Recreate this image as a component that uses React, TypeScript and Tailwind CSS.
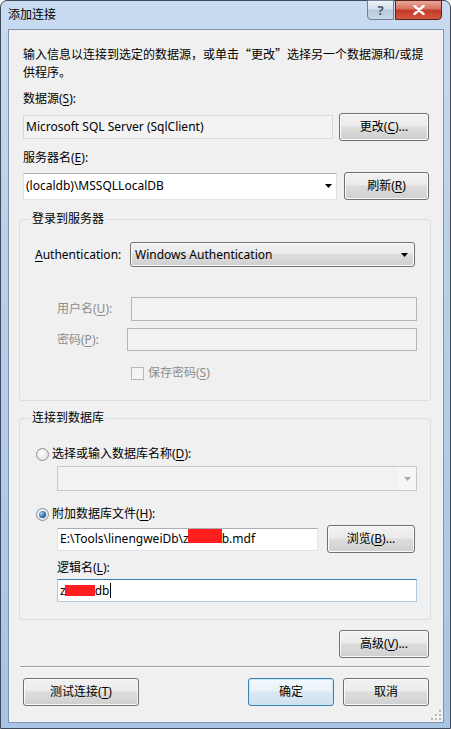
import { ReactNode } from "react";

const font = "font-['Noto_Sans','Noto_Sans_CJK_SC',sans-serif]";

function U({ c }: { c: string }) {
  return <span className="underline underline-offset-2">{c}</span>;
}

function Btn({
  children,
  className = "",
  primary = false,
}: {
  children: ReactNode;
  className?: string;
  primary?: boolean;
}) {
  return (
    <div
      className={`flex h-[28px] shrink-0 items-center justify-center rounded-[3px] border ${
        primary
          ? "border-[#3c7fb1] bg-[linear-gradient(#f4f9fc_0%,#e9f2f8_45%,#d9e8f3_50%,#cfe1ef_100%)] shadow-[inset_0_0_0_1px_#c8e6f8]"
          : "border-[#707070] bg-[linear-gradient(#f2f2f2_0%,#ebebeb_45%,#dddddd_50%,#cfcfcf_100%)] shadow-[inset_0_0_0_1px_#fbfbfb]"
      } ${className}`}
    >
      {children}
    </div>
  );
}

function Arrow({ color = "#000" }: { color?: string }) {
  return (
    <svg width="7" height="4" viewBox="0 0 7 4" className="shrink-0">
      <path d="M0 0h7L3.5 4z" fill={color} />
    </svg>
  );
}

function Radio({ checked = false }: { checked?: boolean }) {
  return (
    <span className="flex h-[13px] w-[13px] shrink-0 items-center justify-center rounded-full border border-[#8e8f8f] bg-[radial-gradient(circle_at_40%_40%,#ffffff,#d8d8d8)]">
      {checked && (
        <span className="h-[7px] w-[7px] rounded-full bg-[radial-gradient(circle_at_35%_35%,#9fd7f7,#2a6fb3_55%,#0c3f78)]" />
      )}
    </span>
  );
}

export default function App() {
  return (
    <div className={`${font} h-[729px] w-[451px] text-[12px] leading-[18px] text-black`}>
      <div className="flex h-full w-full flex-col rounded-t-[7px] border border-[#3e4a5b] bg-[linear-gradient(180deg,#c8dbf1_0%,#b9d0ea_35%,#a9c4e4_100%)] pb-[5px] pl-[7px] pr-[6px]">
        {/* title bar */}
        <div className="flex h-[28px] items-start">
          <div className="pt-[5px]">添加连接</div>
          <div className="-mt-[1px] ml-auto mr-[2px] flex">
            <div className="flex h-[20px] w-[27px] items-center justify-center rounded-bl-[4px] border border-[#6f7f95] bg-[linear-gradient(#eef3f8_0%,#d3deea_45%,#b9c9db_50%,#c9d7e6_100%)] text-[13px] font-bold leading-none text-[#4a5a70]">
              ?
            </div>
            <div className="ml-[1px] flex h-[20px] w-[47px] items-center justify-center rounded-br-[4px] border border-[#5b2019] bg-[linear-gradient(#eaa99b_0%,#d7705f_45%,#c13a27_50%,#d6573f_100%)]">
              <svg width="12" height="10" viewBox="0 0 12 10">
                <path d="M1.5 1l9 8M10.5 1l-9 8" stroke="#fff" strokeWidth="2.4" strokeLinecap="round" />
              </svg>
            </div>
          </div>
        </div>

        {/* client area */}
        <div className="relative flex flex-1 flex-col border border-[#8195ae] bg-[#f0f0f0] px-[14px]">
          <div className="mt-[15px]">
            输入信息以连接到选定的数据源，或单击
            <span className="font-['Noto_Sans_CJK_SC',sans-serif]">“更改”</span>
            选择另一个数据源和/或提
            <br />
            供程序。
          </div>

          <div className="mt-[8px]">
            数据源(<U c="S" />):
          </div>
          <div className="mt-[5px] flex h-[28px] items-center">
            <div className="flex h-[24px] w-[310px] items-center border border-[#d9d9d9] bg-[#f3f3f3] pl-[2px]">
              Microsoft SQL Server (SqlClient)
            </div>
            <Btn className="ml-auto w-[90px]">
              更改(<U c="C" />)...
            </Btn>
          </div>

          <div className="mt-[8px]">
            服务器名(<U c="E" />):
          </div>
          <div className="mt-[5px] flex h-[28px] items-center">
            <div className="flex h-[27px] w-[314px] items-center border border-[#e2e3ea] border-t-[#abadb3] bg-white pl-[2px] pr-[4px]">
              (localdb)\MSSQLLocalDB
              <span className="ml-auto">
                <Arrow />
              </span>
            </div>
            <Btn className="ml-auto w-[85px]">
              刷新(<U c="R" />)
            </Btn>
          </div>

          {/* 登录到服务器 */}
          <fieldset className="-ml-[4px] -mr-[2px] mt-[10px] rounded-[3px] border border-[#d5dfe5] px-[15px] pb-[18px]">
            <legend className="-ml-[5px] px-[2px]">登录到服务器</legend>
            <div className="mt-[14px] flex h-[25px] items-center">
              <div className="w-[95px]">
                <U c="A" />
                uthentication:
              </div>
              <div className="flex h-[25px] flex-1 items-center rounded-[3px] border border-[#707070] bg-[linear-gradient(#f2f2f2_0%,#ebebeb_45%,#dddddd_50%,#cfcfcf_100%)] pl-[4px] pr-[6px] shadow-[inset_0_0_0_1px_#fbfbfb]">
                Windows Authentication
                <span className="ml-auto">
                  <Arrow />
                </span>
              </div>
            </div>
            <div className="-mr-[2px] mt-[30px] flex h-[24px] items-center text-[#8d8d8d]">
              <div className="ml-[22px] w-[74px]">
                用户名(<U c="U" />):
              </div>
              <div className="h-[24px] flex-1 border border-[#b5b5b5] bg-[#f2f2f2]" />
            </div>
            <div className="-mr-[2px] mt-[7px] flex h-[23px] items-center text-[#8d8d8d]">
              <div className="ml-[22px] w-[70px]">
                密码(<U c="P" />):
              </div>
              <div className="h-[23px] flex-1 border border-[#b5b5b5] bg-[#f2f2f2]" />
            </div>
            <div className="mt-[13px] flex h-[18px] items-center pl-[96px] text-[#8d8d8d]">
              <span className="h-[13px] w-[13px] border border-[#b9b9b9] bg-[#f4f4f4]" />
              <span className="ml-[4px]">
                保存密码(<U c="S" />)
              </span>
            </div>
          </fieldset>

          {/* 连接到数据库 */}
          <fieldset className="-ml-[4px] -mr-[2px] mt-[8px] rounded-[3px] border border-[#d5dfe5] px-[15px] pb-[17px]">
            <legend className="-ml-[5px] px-[2px]">连接到数据库</legend>
            <div className="mt-[18px] flex h-[18px] items-center">
              <span className="ml-[1px]">
                <Radio />
              </span>
              <span className="ml-[3px]">
                选择或输入数据库名称(<U c="D" />):
              </span>
            </div>
            <div className="-mr-[2px] ml-[22px] mt-[3px] flex h-[25px] items-center border border-[#c9c9c9] bg-[#f2f2f2]">
              <span className="ml-auto flex h-full w-[18px] items-center justify-center bg-[#f6f6f6]">
                <Arrow color="#a9a9a9" />
              </span>
            </div>
            <div className="mt-[14px] flex h-[18px] items-center">
              <span className="ml-[1px]">
                <Radio checked />
              </span>
              <span className="ml-[3px]">
                附加数据库文件(<U c="H" />):
              </span>
            </div>
            <div className="mt-[2px] flex h-[28px] items-center">
              <div className="ml-[22px] flex h-[23px] w-[261px] items-center border border-[#e2e3ea] border-t-[#abadb3] bg-white pl-[2px]">
                E:\Tools\linengweiDb\z
                <span className="-ml-[1px] mb-[6px] inline-block h-[14px] w-[34px] bg-[#ff1f1f]" />
                b.mdf
              </div>
              <Btn className="ml-auto w-[88px]">
                浏览(<U c="B" />)...
              </Btn>
            </div>
            <div className="ml-[22px] mt-[6px]">
              逻辑名(<U c="L" />):
            </div>
            <div className="-mr-[2px] ml-[22px] mt-[2px] flex h-[23px] items-center border border-[#a9cbe6] border-t-[#3d7bad] bg-white pl-[2px]">
              z
              <span className="-ml-[1px] inline-block h-[11px] w-[30px] bg-[#ff1f1f]" />
              db
              <span className="ml-[1px] inline-block h-[15px] w-[1px] bg-black" />
            </div>
          </fieldset>

          <Btn className="mt-[10px] w-[90px] self-end">
            高级(<U c="V" />)...
          </Btn>

          <div className="-ml-[3px] -mr-[1px] mt-[8px] h-[2px] border-b border-t border-b-white border-t-[#a0a0a0]" />

          <div className="mt-[10px] flex h-[28px] items-center">
            <Btn className="w-[116px]">
              测试连接(<U c="T" />)
            </Btn>
            <Btn primary className="ml-auto w-[86px]">
              确定
            </Btn>
            <Btn className="ml-[9px] w-[86px]">取消</Btn>
          </div>

          {/* size grip */}
          <svg width="10" height="10" viewBox="0 0 10 10" className="absolute bottom-[2px] right-[2px]">
            {[
              [8, 0],
              [8, 4],
              [4, 4],
              [8, 8],
              [4, 8],
              [0, 8],
            ].map(([x, y]) => (
              <g key={`${x}-${y}`}>
                <rect x={x + 1} y={y + 1} width="2" height="2" fill="#ffffff" />
                <rect x={x} y={y} width="2" height="2" fill="#b8b8b8" />
              </g>
            ))}
          </svg>
        </div>
      </div>
    </div>
  );
}
